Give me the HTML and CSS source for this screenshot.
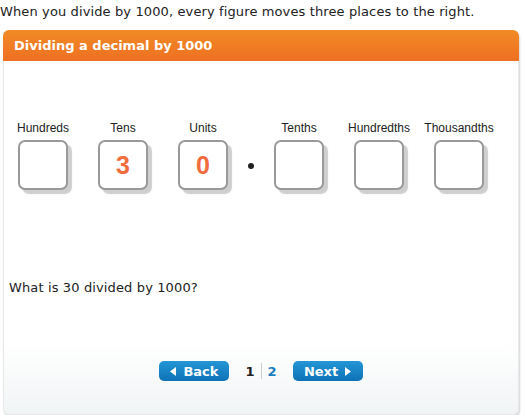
FILE: index.html
```html
<!DOCTYPE html>
<html lang="en">
<head>
    <meta charset="UTF-8">
    <meta name="viewport" content="width=device-width, initial-scale=1.0">
    <title>Dividing a decimal by 1000</title>
    <link rel="stylesheet" href="styles.css">
</head>
<body>

    <p class="intro">When you divide by 1000, every figure moves three places to the right.</p>

    <div class="panel">
        <div class="panel-head">Dividing a decimal by 1000</div>

        <div class="panel-body">
            <div class="places">
                <div class="place">
                    <span class="place-label">Hundreds</span>
                    <div class="digit-box"></div>
                </div>
                <div class="place">
                    <span class="place-label">Tens</span>
                    <div class="digit-box">3</div>
                </div>
                <div class="place">
                    <span class="place-label">Units</span>
                    <div class="digit-box">0</div>
                </div>
                <span class="point"></span>
                <div class="place">
                    <span class="place-label">Tenths</span>
                    <div class="digit-box"></div>
                </div>
                <div class="place">
                    <span class="place-label">Hundredths</span>
                    <div class="digit-box"></div>
                </div>
                <div class="place">
                    <span class="place-label">Thousandths</span>
                    <div class="digit-box"></div>
                </div>
            </div>

            <p class="question">What is 30 divided by 1000?</p>

            <div class="pager">
                <button class="nav-btn">
                    <svg width="6" height="9" viewBox="0 0 6 9"><path d="M6 0 L0 4.5 L6 9 Z" fill="#fff"/></svg>
                    Back
                </button>
                <span class="page-num current">1</span>
                <span class="page-sep"></span>
                <span class="page-num">2</span>
                <button class="nav-btn">
                    Next
                    <svg width="6" height="9" viewBox="0 0 6 9"><path d="M0 0 L6 4.5 L0 9 Z" fill="#fff"/></svg>
                </button>
            </div>
        </div>
    </div>

</body>
</html>
```

FILE: styles.css
```css
body {
    font-family: Verdana, "DejaVu Sans", sans-serif;
    margin: 0;
    padding: 0;
    background-color: #fff;
    color: #222;
}

.intro {
    margin: 0;
    padding-top: 4px;
    font-size: 13px;
    line-height: 16px;
    letter-spacing: 0.12px;
}

.panel {
    margin: 10px 6px 0 3px;
    border-radius: 6px;
    box-shadow: 1px 2px 2px #d4d6d8;
}

.panel-head {
    height: 31px;
    padding-left: 11px;
    line-height: 31px;
    font-size: 13px;
    font-weight: bold;
    color: #fff;
    border-radius: 6px 6px 0 0;
    background: linear-gradient(#f28b25, #ee6f22);
}

.panel-body {
    height: 354px;
    box-sizing: border-box;
    padding-top: 60px;
    border: 1px solid #e8e8e8;
    border-top: none;
    border-radius: 0 0 6px 6px;
    background: linear-gradient(#fff 80%, #f1f4f5);
}

.places {
    display: flex;
    gap: 30px;
    padding-left: 14px;
}

.place {
    width: 50px;
    display: flex;
    flex-direction: column;
    align-items: center;
}

.place-label {
    font-family: Arial, "Liberation Sans", sans-serif;
    font-size: 12px;
    line-height: 14px;
    color: #222;
    white-space: nowrap;
    margin-bottom: 5px;
}

.digit-box {
    width: 50px;
    height: 50px;
    box-sizing: border-box;
    border: 2px solid #999;
    border-radius: 7px;
    background-color: #fff;
    box-shadow: 4px 4px 1px #cfcfcf;
    text-align: center;
    line-height: 46px;
    font-family: Arial, "Liberation Sans", sans-serif;
    font-size: 25px;
    font-weight: bold;
    color: #f26d3d;
}

.point {
    width: 6px;
    height: 6px;
    margin: 42px -10px 0;
    border-radius: 50%;
    background-color: #222;
}

.question {
    margin: 90px 0 0 5px;
    font-size: 13px;
    line-height: 16px;
    letter-spacing: 0.13px;
}

.pager {
    display: flex;
    justify-content: center;
    align-items: center;
    margin-top: 65px;
}

.nav-btn {
    display: flex;
    align-items: center;
    justify-content: center;
    gap: 7px;
    width: 70px;
    height: 20px;
    padding: 0;
    border: none;
    border-radius: 5px;
    background: linear-gradient(#2496d6, #0d72b6);
    color: #fff;
    font-family: Verdana, "DejaVu Sans", sans-serif;
    font-size: 13px;
    font-weight: bold;
    cursor: pointer;
}

.page-num {
    font-size: 13px;
    font-weight: bold;
    color: #1a7dc0;
}

.page-num.current {
    color: #222;
    margin-left: 16px;
}

.page-num:last-of-type {
    margin-right: 16px;
}

.page-sep {
    width: 1px;
    height: 16px;
    margin: 0 6px;
    background-color: #ccc;
}
```
